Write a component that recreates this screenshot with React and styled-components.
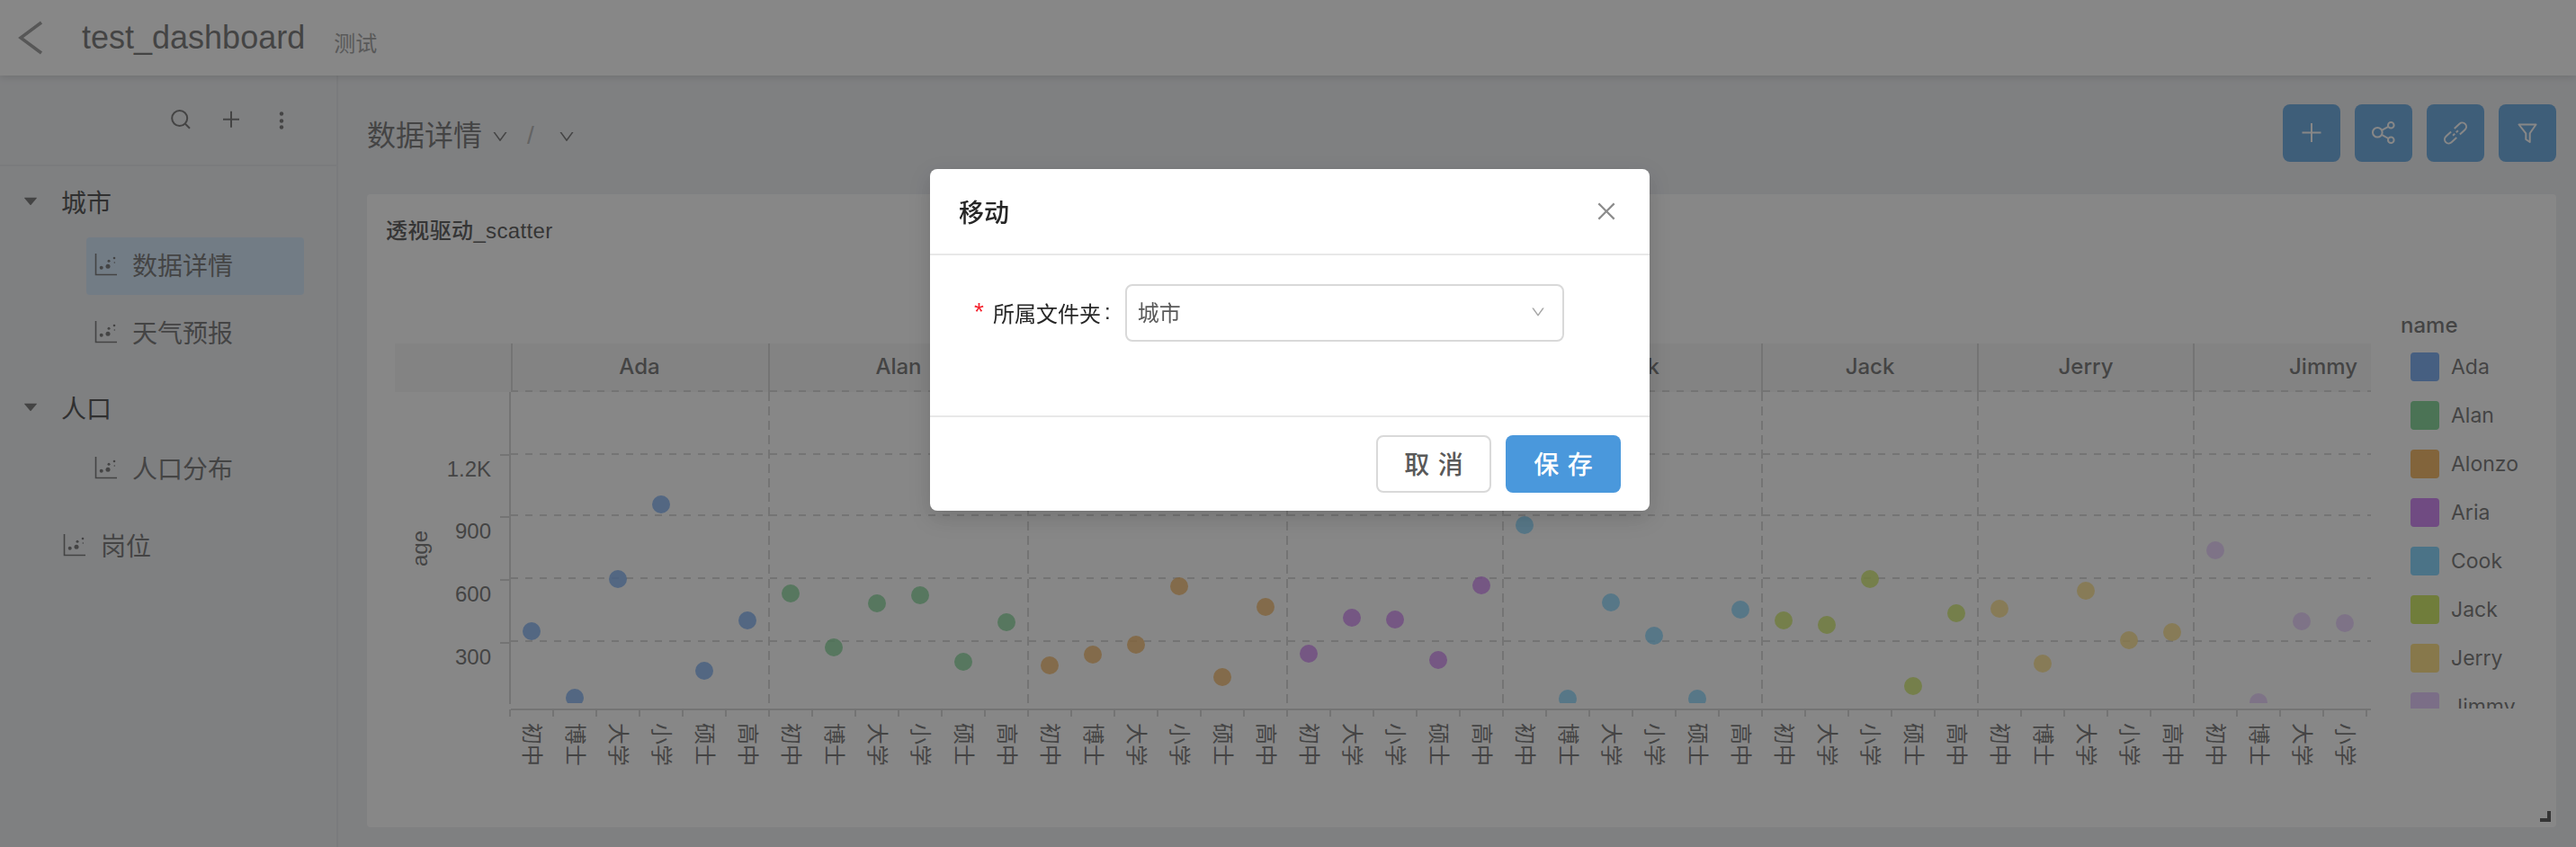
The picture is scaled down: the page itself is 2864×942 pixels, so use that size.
import React from "react";
import styled, { createGlobalStyle } from "styled-components";
import { AiOutlineClose, AiOutlineDown, AiFillCaretDown } from "react-icons/ai";

const FONT = `"Liberation Sans", "Noto Sans CJK SC", sans-serif`;
const LINE = "#d0d0d0";

const GlobalStyle = createGlobalStyle`
  html, body {
    margin: 0;
    padding: 0;
    height: 100%;
    overflow: hidden;
    background: #ebedf1;
    font-family: ${FONT};
  }
  * { box-sizing: border-box; }
`;

const Page = styled.div`
  display: flex;
  flex-direction: column;
  height: 942px;
`;

const Header = styled.header`
  display: flex;
  align-items: center;
  flex: 0 0 84px;
  padding-left: 20px;
  background: #fff;
  box-shadow: 0 2px 8px rgba(0, 0, 0, 0.16);
  position: relative;
  z-index: 1;
`;

const BackIcon = styled.svg`
  width: 28px;
  height: 38px;
  fill: none;
  stroke: #888;
  stroke-width: 3.5;
`;

const AppTitle = styled.h1`
  margin: 0 0 0 43px;
  font-size: 36px;
  font-weight: 400;
  color: #595959;
`;

const AppDesc = styled.span`
  margin: 8px 0 0 32px;
  font-size: 24px;
  color: #8c8c8c;
`;

const Body = styled.div`
  display: flex;
  flex: 1;
  min-height: 0;
`;

const Sidebar = styled.aside`
  flex: 0 0 376px;
  border-right: 2px solid #dfe1e5;
`;

const SideTools = styled.div`
  display: flex;
  justify-content: flex-end;
  align-items: center;
  height: 101px;
  padding-right: 33px;
  border-bottom: 2px solid #dfe1e5;
`;

const ToolButton = styled.span`
  display: flex;
  justify-content: center;
  width: 56px;
`;

const ToolIcon = styled.svg`
  display: block;
  width: 24px;
  height: 24px;
  fill: none;
  stroke: #595959;
  stroke-width: 2;
`;

const Tree = styled.div`
  padding-top: 7px;
`;

const GroupRow = styled.div`
  display: flex;
  align-items: center;
  height: 64px;
  margin-top: ${(p) => p.$gap || 0}px;
  padding-left: 24px;
  font-size: 28px;
  color: #262626;
`;

const Caret = styled(AiFillCaretDown)`
  width: 20px;
  height: 20px;
  margin-right: 24px;
  color: #595959;
`;

const LeafRow = styled.div`
  display: flex;
  align-items: center;
  height: 64px;
  margin-top: ${(p) => p.$gap || 0}px;
  margin-left: ${(p) => (p.$root ? 56 : 96)}px;
  width: 242px;
  padding-left: ${(p) => (p.$root ? 14 : 9)}px;
  padding-bottom: 5px;
  gap: 16px;
  font-size: 28px;
  color: #595959;
  border-radius: 4px;
  background: ${(p) => (p.$active ? "#cbe3fb" : "transparent")};
`;

const ChartGlyph = styled.svg`
  flex: 0 0 26px;
  width: 26px;
  height: 26px;
  color: #595959;
`;

const Main = styled.main`
  flex: 1;
  display: flex;
  flex-direction: column;
  min-width: 0;
  padding: 32px 22px 22px 32px;
`;

const Toolbar = styled.div`
  display: flex;
  align-items: center;
  height: 64px;
  margin-bottom: 36px;
`;

const Crumb = styled.span`
  font-size: 32px;
  color: #595959;
`;

const CrumbArrow = styled(AiOutlineDown)`
  width: 20px;
  height: 20px;
  margin: 8px 0 0 ${(p) => p.$gap}px;
  color: #595959;
`;

const CrumbSlash = styled.span`
  margin: 6px 0 0 20px;
  font-size: 28px;
  color: #a6a6a6;
`;

const ToolbarActions = styled.div`
  display: flex;
  gap: 16px;
  margin-left: auto;
`;

const ActionButton = styled.button`
  display: flex;
  align-items: center;
  justify-content: center;
  width: 64px;
  height: 64px;
  padding: 0;
  border: 0;
  border-radius: 8px;
  background: #4a98dc;
`;

const ActionIcon = styled.svg`
  display: block;
  width: 36px;
  height: 36px;
  fill: none;
  stroke: #fff;
  stroke-width: 2;
  stroke-linejoin: round;
`;

const Card = styled.section`
  position: relative;
  flex: 1;
  border-radius: 4px;
  background: #fff;
`;

const CardTitle = styled.h2`
  height: 84px;
  margin: 0;
  padding: 29px 0 0 21px;
  font-size: 24px;
  line-height: 24px;
  font-weight: 500;
  letter-spacing: 0.35px;
  color: #333;
`;

const ChartRow = styled.div`
  display: flex;
`;

const Plot = styled.svg`
  display: block;
  flex: 0 0 2232px;
  height: 620px;
  font-family: ${FONT};
`;

const Legend = styled.div`
  margin: 50px 0 0 29px;
  height: 438px;
  overflow: hidden;
  font-family: "Inter", ${FONT};
  color: #595959;
`;

const LegendTitle = styled.div`
  height: 24px;
  margin-bottom: 18px;
  font-size: 24px;
  line-height: 24px;
  font-weight: 500;
`;

const LegendItem = styled.div`
  display: flex;
  align-items: center;
  gap: 13px;
  height: 32px;
  margin: 0 0 22px 11px;
  font-size: 23px;
`;

const Swatch = styled.i`
  width: 32px;
  height: 32px;
  border-radius: 4px;
  background: ${(p) => p.$color};
`;

const ResizeHandle = styled.span`
  position: absolute;
  right: 6px;
  bottom: 6px;
  width: 12px;
  height: 12px;
  border-right: 4px solid #333;
  border-bottom: 4px solid #333;
`;

const Overlay = styled.div`
  position: fixed;
  inset: 0;
  z-index: 10;
  display: flex;
  justify-content: center;
  align-items: flex-start;
  padding: 188px 0 0 4px;
  background: rgba(55, 55, 55, 0.6);
`;

const Modal = styled.div`
  width: 800px;
  height: 380px;
  display: flex;
  flex-direction: column;
  border-radius: 8px;
  background: #fff;
  box-shadow: 0 8px 24px rgba(0, 0, 0, 0.15);
`;

const ModalHead = styled.div`
  display: flex;
  align-items: center;
  justify-content: space-between;
  flex: 0 0 96px;
  padding: 0 34px 0 32px;
  border-bottom: 2px solid #e8e8e8;
`;

const ModalTitle = styled.div`
  font-size: 28px;
  font-weight: 500;
  color: #262626;
`;

const CloseIcon = styled(AiOutlineClose)`
  width: 28px;
  height: 28px;
  color: #8c8c8c;
`;

const ModalBody = styled.div`
  flex: 1;
  padding: 32px 0 0 49px;
`;

const FormRow = styled.div`
  display: flex;
  align-items: center;
  height: 64px;
  font-size: 24px;
  color: #262626;
`;

const FormLabel = styled.label`
  display: flex;
  margin-bottom: 1px;
`;

const Required = styled.span`
  width: 21px;
  margin-top: 3px;
  font-size: 28px;
  line-height: 28px;
  color: #f5222d;
`;

const Colon = styled.span`
  margin: 3px 16px 0 4px;
`;

const Select = styled.div`
  display: flex;
  align-items: center;
  justify-content: space-between;
  width: 488px;
  height: 64px;
  padding: 0 18px 3px 12px;
  border: 2px solid #d9d9d9;
  border-radius: 8px;
  color: #595959;
`;

const SelectArrow = styled(AiOutlineDown)`
  width: 18px;
  height: 18px;
  color: #a6a6a6;
`;

const ModalFoot = styled.div`
  display: flex;
  justify-content: flex-end;
  gap: 16px;
  flex: 0 0 105px;
  padding: 20px 32px;
  border-top: 2px solid #e8e8e8;
`;

const FootButton = styled.button`
  width: 128px;
  height: 64px;
  padding: 0 0 3px;
  border: ${(p) => (p.$primary ? "0" : "2px solid #d9d9d9")};
  border-radius: 8px;
  background: ${(p) => (p.$primary ? "#4a98dc" : "#fff")};
  color: ${(p) => (p.$primary ? "#fff" : "#595959")};
  font-family: ${FONT};
  font-size: 28px;
  font-weight: 500;
  letter-spacing: 0.34em;
  text-indent: 0.34em;
`;

const COLORS = {
  Ada: "#5c9bf0",
  Alan: "#69cd82",
  Alonzo: "#f2a743",
  Aria: "#c569f2",
  Cook: "#69cdff",
  Jack: "#c5e643",
  Jerry: "#ffd969",
  Jimmy: "#e2c0ff",
};

const FACETS = [
  { name: "Ada", x: 567, cats: ["初中", "博士", "大学", "小学", "硕士", "高中"], ys: [702, 776, 644, 561, 746, 690] },
  { name: "Alan", x: 855, cats: ["初中", "博士", "大学", "小学", "硕士", "高中"], ys: [660, 720, 671, 662, 736, 692] },
  { name: "Alonzo", x: 1143, cats: ["初中", "博士", "大学", "小学", "硕士", "高中"], ys: [740, 728, 717, 652, 753, 675] },
  { name: "Aria", x: 1431, cats: ["初中", "大学", "小学", "硕士", "高中"], ys: [727, 687, 689, 734, 651] },
  { name: "Cook", x: 1671, cats: ["初中", "博士", "大学", "小学", "硕士", "高中"], ys: [584, 777, 670, 707, 777, 678] },
  { name: "Jack", x: 1959, cats: ["初中", "大学", "小学", "硕士", "高中"], ys: [690, 695, 644, 763, 682] },
  { name: "Jerry", x: 2199, cats: ["初中", "博士", "大学", "小学", "高中"], ys: [677, 738, 657, 712, 703] },
  { name: "Jimmy", x: 2439, labelX: 2583, cats: ["初中", "博士", "大学", "小学"], ys: [612, 781, 691, 693] },
];

const GRID_Y = [435, 505, 573, 643, 713];
const TICKS = [
  { label: "1.2K", y: 506 },
  { label: "900", y: 575 },
  { label: "600", y: 645 },
  { label: "300", y: 715 },
];
const AXIS_END = 2636;
const COL = 48;

const ScatterChart = () => (
  <Plot viewBox="408 300 2232 620">
    <defs>
      <clipPath id="plot-clip">
        <rect x="567" y="436" width="2069" height="346" />
      </clipPath>
    </defs>

    <rect x="439" y="382" width={AXIS_END - 439} height="54" fill="#f5f5f5" />

    {GRID_Y.map((y) => (
      <line key={y} x1="568" x2={AXIS_END} y1={y} y2={y} stroke={LINE} strokeWidth="2" strokeDasharray="8 8" />
    ))}

    <line x1="567" x2="567" y1="436" y2="783" stroke={LINE} strokeWidth="2" />
    <line x1="568" x2={AXIS_END} y1="789" y2="789" stroke={LINE} strokeWidth="2" />
    <line x1="569" x2="569" y1="382" y2="436" stroke={LINE} strokeWidth="2" />

    {TICKS.map((t) => (
      <g key={t.label}>
        <line x1="556" x2="567" y1={t.y} y2={t.y} stroke={LINE} strokeWidth="2" />
        <text x="546" y={t.y + 15} textAnchor="end" dominantBaseline="central" fontSize="24" fill="#595959">
          {t.label}
        </text>
      </g>
    ))}

    <text
      transform="rotate(-90 466 610)"
      x="466"
      y="610"
      textAnchor="middle"
      dominantBaseline="central"
      fontSize="24"
      fill="#595959"
    >
      age
    </text>

    {FACETS.map((f, i) => (
      <g key={f.name}>
        {i > 0 && (
          <>
            <line x1={f.x} x2={f.x} y1="382" y2="436" stroke={LINE} strokeWidth="2" />
            <line x1={f.x} x2={f.x} y1="436" y2="783" stroke={LINE} strokeWidth="2" strokeDasharray="10 6" />
          </>
        )}
        <text
          x={f.labelX || f.x + (f.cats.length * COL) / 2}
          y="407"
          textAnchor="middle"
          dominantBaseline="central"
          fontSize="24"
          fontFamily="Inter, Liberation Sans, sans-serif"
          fontWeight="500"
          fill="#595959"
        >
          {f.name}
        </text>
        {f.cats.map((cat, j) => {
          const cx = f.x + COL * j + COL / 2;
          return (
            <g key={cat}>
              <line x1={f.x + COL * (j + 1)} x2={f.x + COL * (j + 1)} y1="789" y2="797" stroke={LINE} strokeWidth="2" />
              <text
                transform={`rotate(90 ${cx} 804)`}
                x={cx}
                y="804"
                dominantBaseline="central"
                fontSize="24"
                fill="#595959"
              >
                {cat}
              </text>
              <circle
                cx={cx}
                cy={f.ys[j]}
                r="10"
                fill={COLORS[f.name]}
                fillOpacity="0.8"
                clipPath="url(#plot-clip)"
              />
            </g>
          );
        })}
      </g>
    ))}
    <line x1="567" x2="567" y1="789" y2="797" stroke={LINE} strokeWidth="2" />
  </Plot>
);

const Leaf = ({ label, ...rest }) => (
  <LeafRow {...rest}>
    <ChartGlyph viewBox="0 0 26 26">
      <path d="M1.5 1V24.5H25" fill="none" stroke="currentColor" strokeWidth="1.6" />
      <g fill="currentColor">
        <circle cx="7.7" cy="16.7" r="2" />
        <circle cx="15" cy="15.3" r="2.5" />
        <circle cx="16" cy="9.3" r="1.5" />
        <circle cx="22" cy="6" r="1.3" />
        <circle cx="22.3" cy="11" r="0.8" />
      </g>
    </ChartGlyph>
    {label}
  </LeafRow>
);

const App = () => (
  <>
    <GlobalStyle />
    <Page>
      <Header>
        <BackIcon viewBox="0 0 28 38">
          <polyline points="26,2 3,19 26,36" />
        </BackIcon>
        <AppTitle>test_dashboard</AppTitle>
        <AppDesc>测试</AppDesc>
      </Header>
      <Body>
        <Sidebar>
          <SideTools>
            <ToolButton>
              <ToolIcon viewBox="0 0 24 24">
                <circle cx="10.7" cy="9.5" r="8.5" />
                <path d="M17 15.8L22 20.8" />
              </ToolIcon>
            </ToolButton>
            <ToolButton>
              <ToolIcon viewBox="0 0 24 24">
                <path d="M3 10.8H21M12 1.8V19.8" />
              </ToolIcon>
            </ToolButton>
            <ToolButton>
              <ToolIcon viewBox="0 0 24 24">
                <g fill="#595959" stroke="none">
                  <circle cx="12" cy="4.5" r="2.2" />
                  <circle cx="12" cy="12.5" r="2.2" />
                  <circle cx="12" cy="19.5" r="2.2" />
                </g>
              </ToolIcon>
            </ToolButton>
          </SideTools>
          <Tree>
            <GroupRow><Caret />城市</GroupRow>
            <Leaf label="数据详情" $active $gap={8} />
            <Leaf label="天气预报" $gap={11} />
            <GroupRow $gap={18}><Caret />人口</GroupRow>
            <Leaf label="人口分布" $gap={5} />
            <Leaf label="岗位" $root $gap={22} />
          </Tree>
        </Sidebar>
        <Main>
          <Toolbar>
            <Crumb>数据详情</Crumb>
            <CrumbArrow $gap={10} />
            <CrumbSlash>/</CrumbSlash>
            <CrumbArrow $gap={26} />
            <ToolbarActions>
              <ActionButton>
                <ActionIcon viewBox="0 0 36 36">
                  <path d="M7.5 17.5H28.5M18 7V28" />
                </ActionIcon>
              </ActionButton>
              <ActionButton>
                <ActionIcon viewBox="0 0 36 36">
                  <circle cx="11.3" cy="17.3" r="5.3" />
                  <circle cx="26.3" cy="9.3" r="3.3" />
                  <circle cx="26.3" cy="25.7" r="3.3" />
                  <path d="M16 14.8L23.4 10.8M16 19.8L23.4 24" />
                </ActionIcon>
              </ActionButton>
              <ActionButton>
                <ActionIcon viewBox="0 0 36 36">
                  <g transform="rotate(-43 18 18)">
                    <path d="M15.5 13.5H7.75a4.5 4.5 0 0 0 0 9H15.5" />
                    <path d="M20.5 13.5H28.25a4.5 4.5 0 0 1 0 9H20.5" />
                    <path d="M14 18H22" strokeDasharray="3 2" />
                  </g>
                </ActionIcon>
              </ActionButton>
              <ActionButton>
                <ActionIcon viewBox="0 0 36 36">
                  <path d="M8.5 8.5H27.5L20.7 18.3V28L16.3 25V18.3Z" />
                </ActionIcon>
              </ActionButton>
            </ToolbarActions>
          </Toolbar>
          <Card>
            <CardTitle>透视驱动_scatter</CardTitle>
            <ChartRow>
              <ScatterChart />
              <Legend>
                <LegendTitle>name</LegendTitle>
                {Object.keys(COLORS).map((name) => (
                  <LegendItem key={name}>
                    <Swatch $color={COLORS[name]} />
                    {name}
                  </LegendItem>
                ))}
              </Legend>
            </ChartRow>
            <ResizeHandle />
          </Card>
        </Main>
      </Body>
    </Page>
    <Overlay>
      <Modal>
        <ModalHead>
          <ModalTitle>移动</ModalTitle>
          <CloseIcon />
        </ModalHead>
        <ModalBody>
          <FormRow>
            <FormLabel>
              <Required>*</Required>
              所属文件夹
              <Colon>:</Colon>
            </FormLabel>
            <Select>
              城市
              <SelectArrow />
            </Select>
          </FormRow>
        </ModalBody>
        <ModalFoot>
          <FootButton>取消</FootButton>
          <FootButton $primary>保存</FootButton>
        </ModalFoot>
      </Modal>
    </Overlay>
  </>
);

export default App;
